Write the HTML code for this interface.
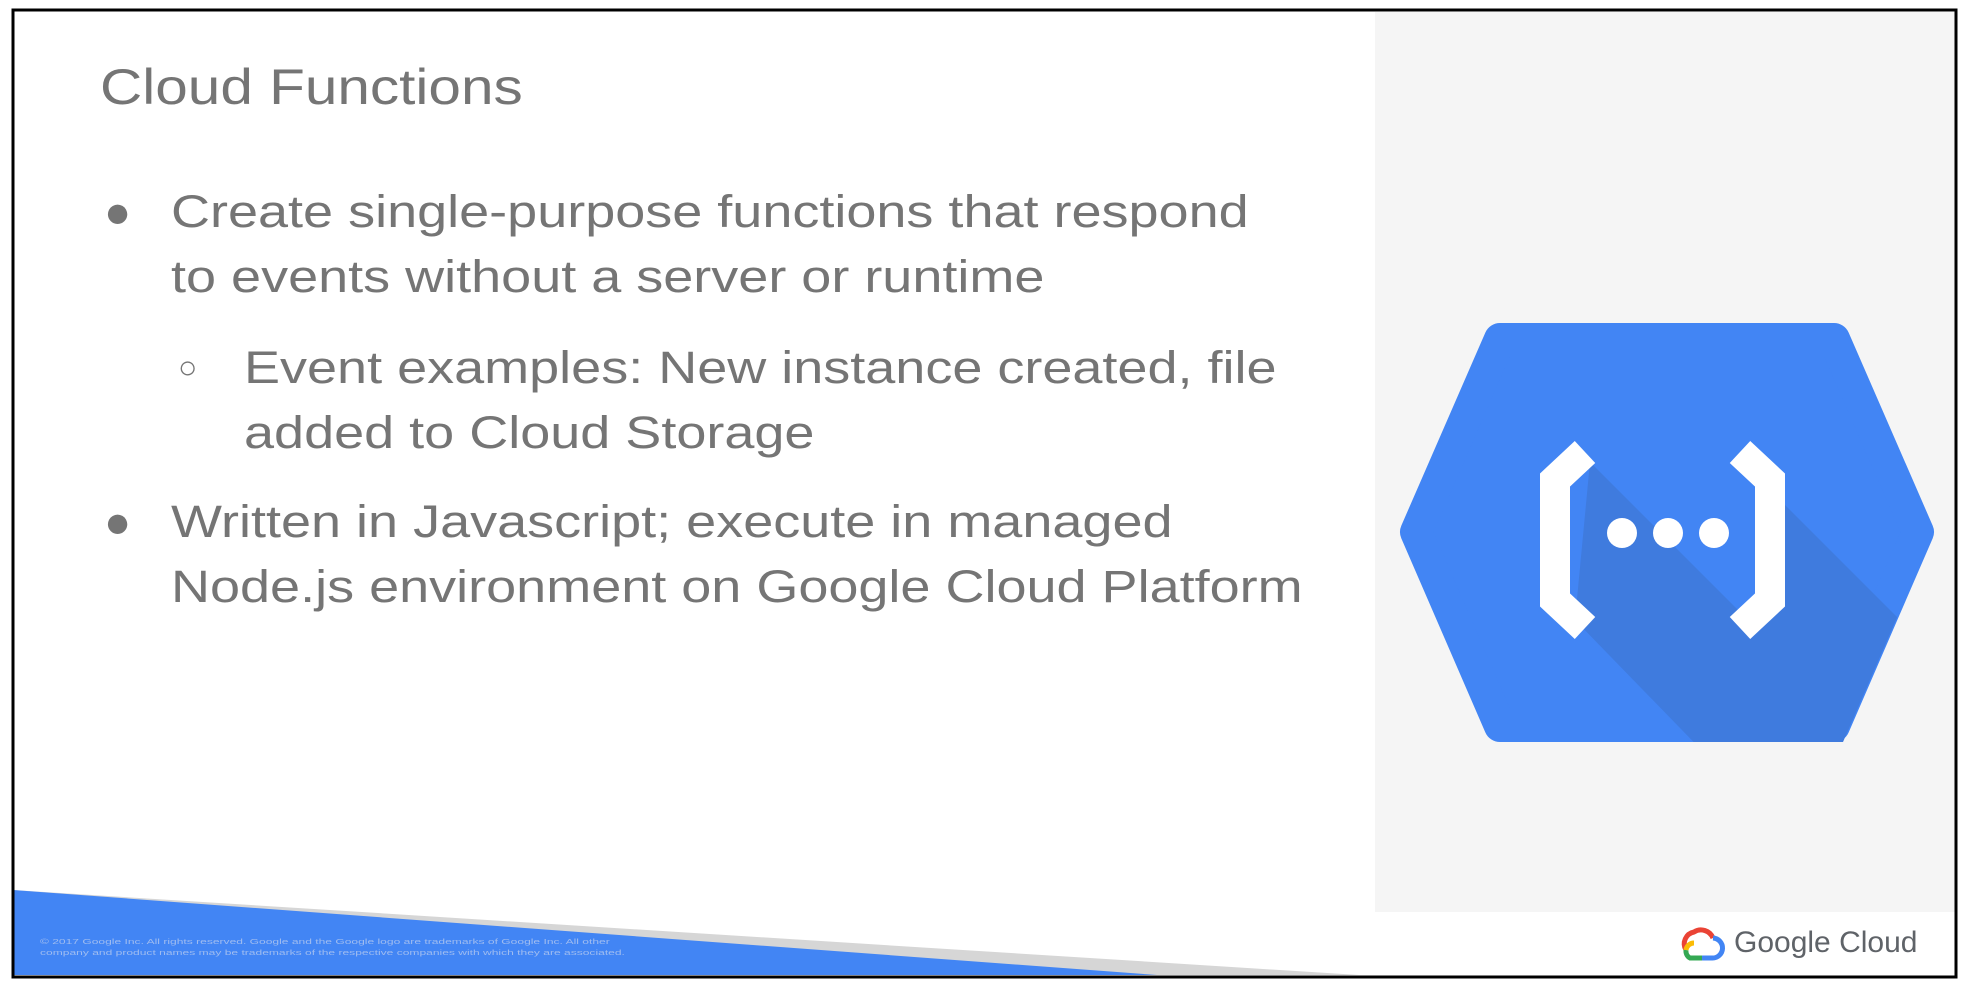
<!DOCTYPE html>
<html><head><meta charset="utf-8"><style>
html,body{margin:0;padding:0;background:#fff;}
body{width:1973px;height:984px;position:relative;overflow:hidden;font-family:"Liberation Sans",sans-serif;color:#757575;}
.t{position:absolute;white-space:nowrap;transform-origin:0 0;}
.s{transform:scaleX(1.2);}
</style></head><body>
<div style="position:absolute;left:1375px;top:12px;width:580px;height:900px;background:#f5f5f5"></div>
<svg style="position:absolute;left:0;top:0" width="1973" height="984">
<defs><clipPath id="hx"><polygon points="1400,532 1491,323 1843,323 1934,532 1843,742 1491,742"/></clipPath></defs>
<polygon points="13,890 1359,975 13,975" fill="#d6d6d6"/>
<polygon points="13,890 1157,975 13,975" fill="#4285f4"/>
<polygon points="1416,532 1500,339 1834,339 1918,532 1834,726 1500,726" fill="#4285f4" stroke="#4285f4" stroke-width="32" stroke-linejoin="round"/>
<polygon clip-path="url(#hx)" points="1590,462 1755,627 1755,475 1990,710 1990,800 1750,800 1575,620" fill="#3f7bde"/>
<path d="M1585,452 L1555,480 L1555,600 L1585,628" fill="none" stroke="#fff" stroke-width="30"/>
<path d="M1740,452 L1770,480 L1770,600 L1740,628" fill="none" stroke="#fff" stroke-width="30"/>
<circle cx="1622" cy="533" r="15" fill="#fff"/><circle cx="1668" cy="533" r="15" fill="#fff"/><circle cx="1714" cy="533" r="15" fill="#fff"/>
<g transform="translate(1680,928)">
<path d="M6,22 A12,12 0 0 1 14,4 A13,13 0 0 1 33,10" fill="none" stroke="#ea4335" stroke-width="5"/>
<path d="M33,10 A10,10 0 0 1 32,30 L22,30" fill="none" stroke="#4285f4" stroke-width="5"/>
<path d="M22,30 L10,30 A8,8 0 0 1 6,22" fill="none" stroke="#34a853" stroke-width="5"/>
<path d="M6,22 A8,8 0 0 1 14,15" fill="none" stroke="#fbbc05" stroke-width="5"/>
</g>
<rect x="13" y="10" width="1943" height="967" fill="none" stroke="#000" stroke-width="3"/>
</svg>
<div class="t" style="left:1734px;top:926px;font-size:30px;color:#5f6368;transform:scaleX(1.0)">Google Cloud</div>
<div class="t" style="left:40px;top:937px;font-size:7px;color:#9fbcf0;line-height:11px;transform:scaleX(1.72)">© 2017 Google Inc. All rights reserved. Google and the Google logo are trademarks of Google Inc. All other<br>company and product names may be trademarks of the respective companies with which they are associated.</div>
<div class="t s" style="left:100px;top:58px;font-size:50px;transform:scaleX(1.17)">Cloud Functions</div>
<div style="position:absolute;left:0;top:0;font-size:45px;line-height:65px">
<div class="t" style="left:104px;top:179px">●</div>
<div class="t s" style="left:171px;top:179px">Create single-purpose functions that respond<br>to events without a server or runtime</div>
<div class="t" style="left:178px;top:335px;font-size:32px">○</div>
<div class="t s" style="left:244px;top:335px">Event examples: New instance created, file<br>added to Cloud Storage</div>
<div class="t" style="left:104px;top:489px">●</div>
<div class="t s" style="left:171px;top:489px">Written in Javascript; execute in managed<br>Node.js environment on Google Cloud Platform</div>
</div>
</body></html>
